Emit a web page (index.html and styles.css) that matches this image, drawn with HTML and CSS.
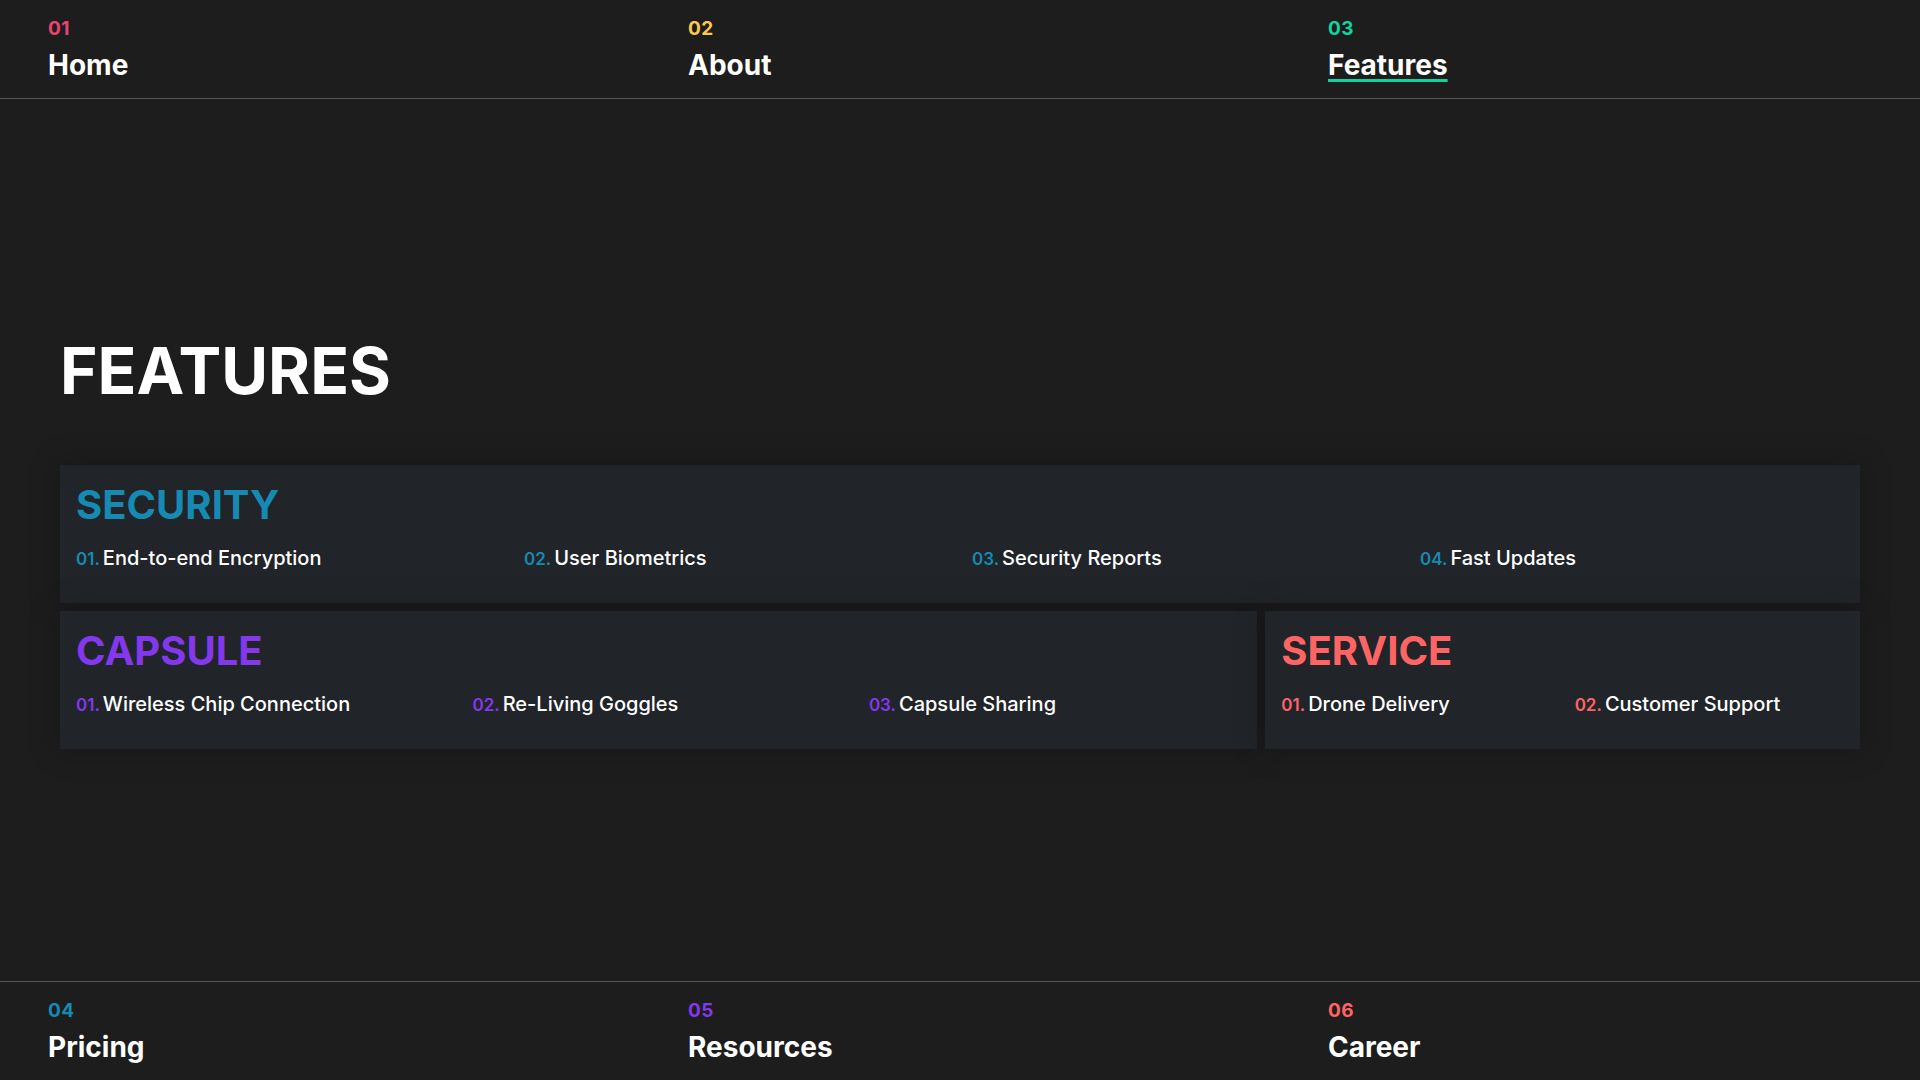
FILE: index.html
```html
<!DOCTYPE html>
<html lang="en">
<head>
<meta charset="utf-8">
<title>Features</title>
<link rel="stylesheet" href="styles.css">
</head>
<body>
<div class="page">
  <nav class="nav nav-top">
    <a class="nav-item" href="#"><span class="nav-num c-pink">01</span><span class="nav-label">Home</span></a>
    <a class="nav-item" href="#"><span class="nav-num c-yellow">02</span><span class="nav-label">About</span></a>
    <a class="nav-item" href="#"><span class="nav-num c-green">03</span><span class="nav-label active">Features</span></a>
  </nav>
  <main class="main">
    <div class="content">
      <h1 class="title">FEATURES</h1>
      <div class="grid">
        <section class="card span-3">
          <h2 class="card-title c-blue">SECURITY</h2>
          <ul class="items cols-4 c-blue">
            <li><span class="idx">01.</span><span class="txt">End-to-end Encryption</span></li>
            <li><span class="idx">02.</span><span class="txt">User Biometrics</span></li>
            <li><span class="idx">03.</span><span class="txt">Security Reports</span></li>
            <li><span class="idx">04.</span><span class="txt">Fast Updates</span></li>
          </ul>
        </section>
        <section class="card span-2">
          <h2 class="card-title c-purple">CAPSULE</h2>
          <ul class="items cols-3 c-purple">
            <li><span class="idx">01.</span><span class="txt">Wireless Chip Connection</span></li>
            <li><span class="idx">02.</span><span class="txt">Re-Living Goggles</span></li>
            <li><span class="idx">03.</span><span class="txt">Capsule Sharing</span></li>
          </ul>
        </section>
        <section class="card">
          <h2 class="card-title c-coral">SERVICE</h2>
          <ul class="items cols-2 c-coral">
            <li><span class="idx">01.</span><span class="txt">Drone Delivery</span></li>
            <li><span class="idx">02.</span><span class="txt">Customer Support</span></li>
          </ul>
        </section>
      </div>
    </div>
  </main>
  <nav class="nav nav-bottom">
    <a class="nav-item" href="#"><span class="nav-num c-blue">04</span><span class="nav-label">Pricing</span></a>
    <a class="nav-item" href="#"><span class="nav-num c-purple">05</span><span class="nav-label">Resources</span></a>
    <a class="nav-item" href="#"><span class="nav-num c-coral">06</span><span class="nav-label">Career</span></a>
  </nav>
</div>
</body>
</html>
```
FILE: styles.css
```css
* { box-sizing: border-box; }
html, body { margin: 0; padding: 0; }
body {
  background: #1d1d1d;
  color: #ffffff;
  font-family: Inter, "Noto Sans", Arial, sans-serif;
  overflow: hidden;
}
.page {
  height: 1080px;
  display: flex;
  flex-direction: column;
}
.nav {
  display: grid;
  grid-template-columns: repeat(3, 1fr);
  height: 99px;
  flex: 0 0 auto;
}
.nav-top { border-bottom: 1px solid #555555; }
.nav-bottom { border-top: 1px solid #555555; }
.nav-item {
  display: flex;
  flex-direction: column;
  align-items: flex-start;
  gap: 6px;
  padding: 15px 48px 0;
  text-decoration: none;
  color: #fff;
}
.nav-num {
  font-size: 19px;
  line-height: 27px;
  font-weight: 700;
  letter-spacing: 0.02em;
}
.nav-label {
  font-size: 28px;
  line-height: 34px;
  font-weight: 700;
  color: #fff;
}
.nav-label.active {
  text-decoration: underline;
  text-decoration-color: #12d39f;
  text-decoration-thickness: 3px;
  text-underline-offset: 4px;
}
.c-pink { color: #ea4470; }
.c-yellow { color: #fdc94c; }
.c-green { color: #13d3a0; }
.c-blue { color: #168ab2; }
.c-purple { color: #8338ec; }
.c-coral { color: #ff6464; }

.main {
  flex: 1 1 auto;
  display: flex;
  align-items: center;
  padding: 0 60px;
}
.content { width: 100%; }
.title {
  margin: 0 0 56px;
  font-size: 64px;
  line-height: 77px;
  font-weight: 700;
  color: #fff;
}
.grid {
  display: grid;
  grid-template-columns: repeat(3, 1fr);
  gap: 8px;
}
.card {
  background: #212429;
  padding: 16px 16px 29px;
  box-shadow: 0 0 30px rgba(0, 0, 0, 0.25);
}
.span-3 { grid-column: span 3; }
.span-2 { grid-column: span 2; }
.card-title {
  margin: 0 0 14px;
  font-size: 40px;
  line-height: 48px;
  font-weight: 700;
}
.items {
  list-style: none;
  margin: 0;
  padding: 0;
  display: grid;
  gap: 24px;
}
.cols-4 { grid-template-columns: repeat(4, 1fr); }
.cols-3 { grid-template-columns: repeat(3, 1fr); }
.cols-2 { grid-template-columns: repeat(2, 1fr); }
.items li {
  line-height: 30px;
  white-space: nowrap;
}
.idx {
  font-size: 17px;
  font-weight: 600;
  margin-right: 3px;
}
.txt {
  font-size: 20px;
  font-weight: 500;
  color: #fff;
}
```
